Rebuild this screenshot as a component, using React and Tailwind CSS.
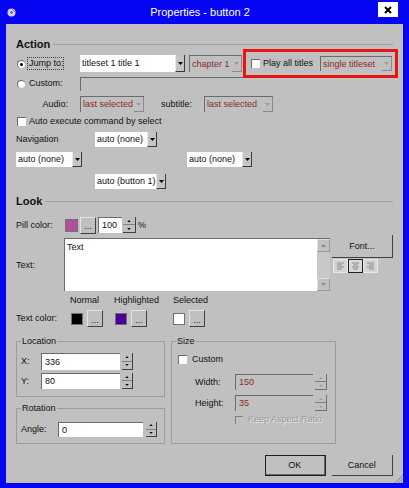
import React from 'react';

const Tri = ({ up, c = '#000', w = 5, h = 3 }) => (
  <svg width={w} height={h} viewBox="0 0 5 3" className="block">
    <polygon points={up ? '0,3 5,3 2.5,0' : '0,0 5,0 2.5,3'} fill={c} />
  </svg>
);

const Select = ({ className, text, white }) => (
  <div className={`flex shrink-0 ${className} ${white ? 'bg-white' : 'border-l border-t border-[#6b6b6b]'}`}>
    <div className={`flex-1 flex items-center pl-[2px] whitespace-nowrap overflow-hidden ${white ? '' : 'text-[#8a2c2c]'}`}>{text}</div>
    <div className={`w-[10px] flex items-center justify-center border-r border-b ${white ? 'bg-[#c4c4c4] border-[#3a3a3a] border-l border-l-[#e8e8e8]' : 'border-[#8a8a8a]'}`}>
      <Tri c={white ? '#000' : '#9a9a9a'} />
    </div>
  </div>
);

const Dots = ({ className = '' }) => (
  <div className={`w-[16px] h-[17px] shrink-0 border border-[#404040] border-l-[#e4e4e4] border-t-[#e4e4e4] flex items-center justify-center pt-[3px] ${className}`}>...</div>
);

const Spin = ({ className, c = '#000' }) => (
  <div className={`flex flex-col shrink-0 border-r border-b border-[#404040] ${className}`}>
    <div className="flex-1 flex items-center justify-center border-b border-[#808080]"><Tri up c={c} w={4} h={2} /></div>
    <div className="flex-1 flex items-center justify-center"><Tri c={c} w={4} h={2} /></div>
  </div>
);

const Check = ({ className = '' }) => (
  <div className={`w-[9px] h-[9px] bg-white border-l border-t border-[#6b6b6b] shrink-0 ${className}`} />
);

const Radio = ({ on }) => (
  <div className="w-[8px] h-[8px] ml-[1px] rounded-full bg-white border-l border-t border-[#6b6b6b] flex items-center justify-center shrink-0">
    {on && <div className="w-[3px] h-[3px] rounded-full bg-black" />}
  </div>
);

const Field = ({ className, text, dis }) => (
  <div className={`shrink-0 flex items-center pl-[3px] border-l border-t border-[#6b6b6b] ${dis ? 'text-[#8a2c2c]' : 'bg-white'} ${className}`}>{text}</div>
);

const Header = ({ text, className = '' }) => (
  <div className={`flex items-center h-[14px] ${className}`}>
    <span className="font-bold text-[11px] leading-none">{text}</span>
    <div className="flex-1 ml-[3px] h-px bg-[#a3a3a3]" />
  </div>
);

const Swatch = ({ className }) => <div className={`w-[12px] h-[12px] shrink-0 border border-[#707070] ${className}`} />;

const AlignBtn = ({ pressed, xs }) => (
  <div className={`w-[15px] h-[14px] flex items-center justify-center ${pressed ? 'border border-[#202020] bg-[#d8d8d8]' : 'bg-[#d4d4d4] border border-[#e8e8e8]'}`}>
    <svg width="9" height="9" viewBox="0 0 9 9">
      {xs.map(([a, b], i) => (
        <line key={i} x1={a} x2={b} y1={1 + i * 2} y2={1 + i * 2} stroke="#8a8a8a" strokeWidth="1" />
      ))}
    </svg>
  </div>
);

export default function App() {
  return (
    <div className="w-[409px] h-[488px] bg-[#0606f2] flex flex-col font-['Liberation_Sans',Arial,sans-serif] text-[9px] leading-[11px] text-[#111]">
      {/* title bar */}
      <div className="h-[24px] flex items-center shrink-0">
        <svg width="9" height="9" viewBox="0 0 9 9" className="ml-[7px]">
          <circle cx="4.5" cy="4.5" r="4" fill="#d8d0f0" />
          <circle cx="4.5" cy="4.5" r="1.3" fill="#7050b0" />
          <path d="M5 1 L8 4" stroke="#a070d0" strokeWidth="1" />
        </svg>
        <div className="flex-1 text-center text-white text-[11px] leading-none pl-[6px]">Properties - button 2</div>
        <div className="w-[20px] h-[15px] bg-white mr-[11px] -mt-[5px] flex items-center justify-center">
          <svg width="8" height="8" viewBox="0 0 8 8">
            <path d="M1 1 L7 7 M7 1 L1 7" stroke="#000" strokeWidth="2" />
          </svg>
        </div>
      </div>

      {/* client area */}
      <div className="relative flex-1 bg-[#c0c0c0] mx-[6px] mb-[5px] pl-[10px] pr-[10px] pt-[13px] flex flex-col">
        <Header text="Action" />

        <div className="flex items-center h-[25px]">
          <Radio on />
          <div className="ml-[2px] w-[37px] h-[13px] shrink-0 whitespace-nowrap border border-dotted border-[#404040] flex items-center pl-[1px]">Jump to:</div>
          <Select white className="ml-[16px] w-[105px] h-[17px]" text="titleset 1 title 1" />
          <Select className="ml-[4px] w-[53px] h-[17px]" text="chapter 1" />
          <div className="relative z-10 ml-[1px] w-[155px] h-[29px] shrink-0 border-[3px] border-[#e81414] flex items-center pl-[5px]">
            <Check />
            <span className="ml-[3px] w-[54px] whitespace-nowrap">Play all titles</span>
            <Select className="ml-[3px] w-[72px] h-[15px]" text="single titleset" />
          </div>
        </div>

        <div className="flex items-center h-[15px]">
          <Radio />
          <span className="ml-[4px] w-[51px]">Custom:</span>
          <div className="w-[312px] h-[14px] shrink-0 border-l border-t border-[#6b6b6b]" />
        </div>

        <div className="flex items-center mt-[5px] h-[16px]">
          <span className="w-[64px] text-right pr-[12px]">Audio:</span>
          <Select className="w-[64px] h-[16px]" text="last selected" />
          <span className="ml-[17px] w-[43px]">subtitle:</span>
          <Select className="w-[69px] h-[16px]" text="last selected" />
        </div>

        <div className="flex items-center mt-[2px] h-[14px]">
          <Check className="ml-[1px]" />
          <span className="ml-[3px]">Auto execute command by select</span>
        </div>

        <div className="flex items-center mt-[4px] h-[15px]">
          <span className="w-[79px]">Navigation</span>
          <Select white className="w-[62px] h-[15px]" text="auto (none)" />
        </div>

        <div className="flex items-center mt-[5px] h-[15px]">
          <Select white className="w-[66px] h-[15px]" text="auto (none)" />
          <Select white className="ml-[105px] w-[65px] h-[15px]" text="auto (none)" />
        </div>

        <div className="flex items-center mt-[7px] h-[15px]">
          <Select white className="ml-[79px] w-[71px] h-[15px]" text="auto (button 1)" />
        </div>

        <Header text="Look" className="mt-[5px]" />

        <div className="flex items-center mt-[9px] h-[16px]">
          <span className="w-[49px]">Pill color:</span>
          <Swatch className="w-[13px] h-[13px] bg-[#b24e9c] border-[#8a3a7a]" />
          <Dots className="ml-[2px]" />
          <Field className="ml-[2px] w-[24px] h-[16px]" text="100" />
          <Spin className="ml-[1px] w-[13px] h-[16px]" />
          <span className="ml-[2px]">%</span>
        </div>

        <div className="flex mt-[5px] h-[53px]">
          <span className="w-[48px] self-center pt-[2px]">Text:</span>
          <div className="w-[266px] h-[53px] bg-white border-l border-t border-[#6b6b6b] flex">
            <div className="flex-1 pl-[2px] pt-[3px]">Text</div>
            <div className="w-[13px] bg-[#c8c8c8] flex flex-col justify-between">
              <div className="h-[13px] flex items-center justify-center bg-[#c0c0c0] border border-[#9a9a9a] border-l-[#e0e0e0] border-t-[#e0e0e0]">
                <Tri up c="#8a8a8a" />
              </div>
              <div className="h-[13px] flex items-center justify-center bg-[#c0c0c0] border border-[#9a9a9a] border-l-[#e0e0e0] border-t-[#e0e0e0]">
                <Tri c="#8a8a8a" />
              </div>
            </div>
          </div>
          <div className="flex flex-col -mt-[3px] ml-[2px]">
            <div className="w-[61px] h-[23px] border-r border-b border-[#404040] flex items-center justify-center">Font...</div>
            <div className="flex mt-[1px] ml-[1px]">
              <AlignBtn xs={[[1, 8], [1, 6], [1, 8], [1, 6]]} />
              <AlignBtn pressed xs={[[1, 8], [2, 7], [1, 8], [2, 7]]} />
              <AlignBtn xs={[[1, 8], [3, 8], [1, 8], [3, 8]]} />
            </div>
          </div>
        </div>

        <div className="flex items-center mt-[3px] h-[12px]">
          <span className="ml-[54px] w-[44px]">Normal</span>
          <span className="w-[59px]">Highlighted</span>
          <span>Selected</span>
        </div>

        <div className="flex items-center mt-[4px] h-[17px]">
          <span className="w-[55px]">Text color:</span>
          <Swatch className="bg-black" />
          <Dots className="ml-[4px]" />
          <Swatch className="ml-[12px] bg-[#4a0094]" />
          <Dots className="ml-[4px]" />
          <Swatch className="ml-[26px] bg-white border-[#9a9a9a]" />
          <Dots className="ml-[4px]" />
        </div>

        <div className="flex mt-[9px]">
          <div className="flex flex-col w-[149px] shrink-0">
            <fieldset className="border border-[#9c9c9c] h-[61px] px-[4px]">
              <legend className="px-[1px] leading-[11px]">Location</legend>
              <div className="flex items-center mt-[6px] h-[17px]">
                <span className="w-[20px]">X:</span>
                <Field className="w-[79px] h-[17px]" text="336" />
                <Spin className="ml-[2px] w-[11px] h-[17px]" />
              </div>
              <div className="flex items-center mt-[3px] h-[16px]">
                <span className="w-[20px]">Y:</span>
                <Field className="w-[79px] h-[16px]" text="80" />
                <Spin className="ml-[2px] w-[11px] h-[16px]" />
              </div>
            </fieldset>
            <fieldset className="border border-[#9c9c9c] h-[41px] mt-[6px] px-[4px]">
              <legend className="px-[1px] leading-[11px]">Rotation</legend>
              <div className="flex items-center mt-[8px] h-[15px]">
                <span className="w-[37px]">Angle:</span>
                <Field className="w-[85px] h-[15px]" text="0" />
                <Spin className="ml-[3px] w-[11px] h-[15px]" />
              </div>
            </fieldset>
          </div>
          <fieldset className="ml-[6px] w-[165px] h-[108px] border border-[#9c9c9c] px-[4px] shrink-0">
            <legend className="px-[1px] leading-[11px]">Size</legend>
            <div className="flex items-center mt-[6px] h-[12px]">
              <Check className="ml-[2px]" />
              <span className="ml-[5px]">Custom</span>
            </div>
            <div className="flex items-center mt-[9px] h-[16px]">
              <span className="w-[59px] pl-[19px]">Width:</span>
              <Field dis className="w-[78px] h-[16px]" text="150" />
              <Spin c="#9a9a9a" className="ml-[2px] w-[12px] h-[16px] border-[#707070]" />
            </div>
            <div className="flex items-center mt-[5px] h-[16px]">
              <span className="w-[59px] pl-[19px]">Height:</span>
              <Field dis className="w-[78px] h-[16px]" text="35" />
              <Spin c="#9a9a9a" className="ml-[2px] w-[12px] h-[16px] border-[#707070]" />
            </div>
            <div className="flex items-center mt-[3px] h-[11px]">
              <div className="ml-[59px] w-[8px] h-[8px] border-l border-t border-[#808080] shrink-0" />
              <span className="ml-[5px] text-[#9a9a9a] [text-shadow:1px_1px_0_#e8e8e8]">Keep Aspect Ratio</span>
            </div>
          </fieldset>
        </div>

        <div className="flex mt-[11px] h-[21px]">
          <div className="ml-[249px] w-[61px] h-[21px] border border-[#1e1e1e] flex items-center justify-center">
            <div className="w-full h-full border-r border-b border-[#6a6a6a] flex items-center justify-center">OK</div>
          </div>
          <div className="ml-[6px] w-[62px] h-[21px] border-r border-b border-[#404040] flex items-center justify-center">Cancel</div>
        </div>

        <svg width="9" height="9" viewBox="0 0 9 9" className="absolute right-0 bottom-0">
          <path d="M9 1 L1 9 M9 4 L4 9 M9 7 L7 9" stroke="#8a8a8a" strokeWidth="1" />
        </svg>
      </div>
    </div>
  );
}
